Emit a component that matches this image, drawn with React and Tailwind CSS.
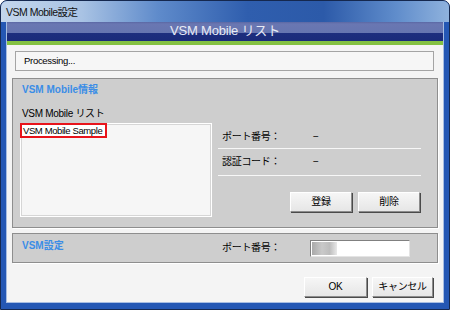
export default function App() {
  const btn =
    "w-[62px] h-[20px] flex items-center justify-center bg-[linear-gradient(180deg,#f6f6f6,#e6e6e6)] border border-t-white border-l-white border-r-[#8c8c8c] border-b-[#8c8c8c] shadow-[1px_1px_0_#4a4a4a]";
  return (
    <div className="w-[450px] h-[310px] overflow-hidden bg-white">
      <div className="w-[450px] h-[310px] flex flex-col rounded-t-[7px] border border-[#15284f] bg-[#2457b4] font-['Liberation_Sans','Noto_Sans_CJK_JP',sans-serif] text-[10px] leading-[12px] text-black tracking-[-0.3px]">
        {/* title bar */}
        <div className="h-[21px] shrink-0 flex items-center pl-[5px] rounded-t-[6px] bg-[linear-gradient(90deg,#c3d6ec_0%,#a9c3e4_18%,#5f8bcb_35%,#2f5eae_55%,#2c5aa9_72%,#5f8ccb_88%,#8fb2dd_100%)] text-[10.5px] tracking-[-0.5px] text-[#111]">
          VSM Mobile設定
        </div>
        {/* client area */}
        <div className="flex-1 mx-[5px] mb-[6px] border-x border-b border-[#a7bde2] bg-[#f4f4f4] flex flex-col">
          {/* header */}
          <div className="h-[23px] shrink-0 text-center text-[13px] leading-[18px] text-[#e8ebf6] tracking-[-0.2px] bg-[linear-gradient(180deg,#5b68a4_0px,#6a77b2_2px,#6575b0_11px,#1d2e7e_11px,#1a2b7a_19px,#84c142_19px,#84c142_23px)]">
            VSM Mobile リスト
          </div>
          {/* processing */}
          <div className="mt-[6px] ml-[8px] mr-[9px] h-[20px] shrink-0 border border-[#a4a4a4] bg-[#f6f6f6] flex items-center pl-[8px] text-[9.5px]">
            Processing...
          </div>
          {/* group 1 */}
          <div className="mt-[7px] mx-[5px] h-[150px] shrink-0 border border-[#8e8e8e] bg-[#cecece] shadow-[1px_1px_0_#ffffff] flex flex-col">
            <div className="pt-[5px] pl-[9px] font-bold tracking-[0px] text-[#3b8de6]">VSM Mobile情報</div>
            <div className="mt-[12px] flex">
              <div className="flex flex-col pl-[7px]">
                <div className="pl-[2px]">VSM Mobile リスト</div>
                <div className="relative mt-[3px] w-[192px] h-[94px] border border-white bg-[#f6f6f6] shadow-[inset_0_0_0_1px_#d6d6d6]">
                  <div className="absolute left-[-1px] top-[-1px] w-[87px] h-[15px] border-[2.5px] border-[#e8141b] bg-white flex items-center pl-[1px] text-[9.5px] tracking-[-0.4px] whitespace-nowrap">
                    VSM Mobile Sample
                  </div>
                </div>
              </div>
              <div className="ml-[6px] w-[203px] pt-[23px] flex flex-col">
                <div className="flex pl-[4px]">
                  <span className="w-[91px]">ポート番号：</span>
                  <span>−</span>
                </div>
                <div className="mt-[5px] h-px bg-[#f7f7f7]"></div>
                <div className="mt-[7px] flex pl-[4px]">
                  <span className="w-[91px]">認証コード：</span>
                  <span>−</span>
                </div>
                <div className="mt-[7px] h-px bg-[#f7f7f7]"></div>
                <div className="mt-[16px] flex justify-end gap-[6px] pr-[1px]">
                  <div className={btn}>登録</div>
                  <div className={btn}>削除</div>
                </div>
              </div>
            </div>
          </div>
          {/* group 2 */}
          <div className="mt-[5px] mx-[5px] h-[30px] shrink-0 border border-[#8e8e8e] bg-[#cecece] shadow-[1px_1px_0_#ffffff] flex items-center">
            <div className="w-[209px] pl-[9px] mb-[5px] font-bold tracking-[0px] text-[#3b8de6]">VSM設定</div>
            <div className="w-[88px]">ポート番号：</div>
            <div className="w-[100px] h-[17px] bg-white border border-t-[#808080] border-l-[#808080] border-r-[#e4e4e4] border-b-[#e4e4e4] flex items-center pl-[1px]">
              <div className="w-[25px] h-[13px] bg-[linear-gradient(90deg,#a9a9a9,#c9c9c9_40%,#bdbdbd_70%,#e8e8e8)]"></div>
            </div>
          </div>
          {/* bottom buttons */}
          <div className="mt-[14px] flex justify-end gap-[5px] pr-[10px]">
            <div className={btn + " !w-[63px]"}>OK</div>
            <div className={btn + " !w-[61px]"}>キャンセル</div>
          </div>
        </div>
      </div>
    </div>
  );
}
